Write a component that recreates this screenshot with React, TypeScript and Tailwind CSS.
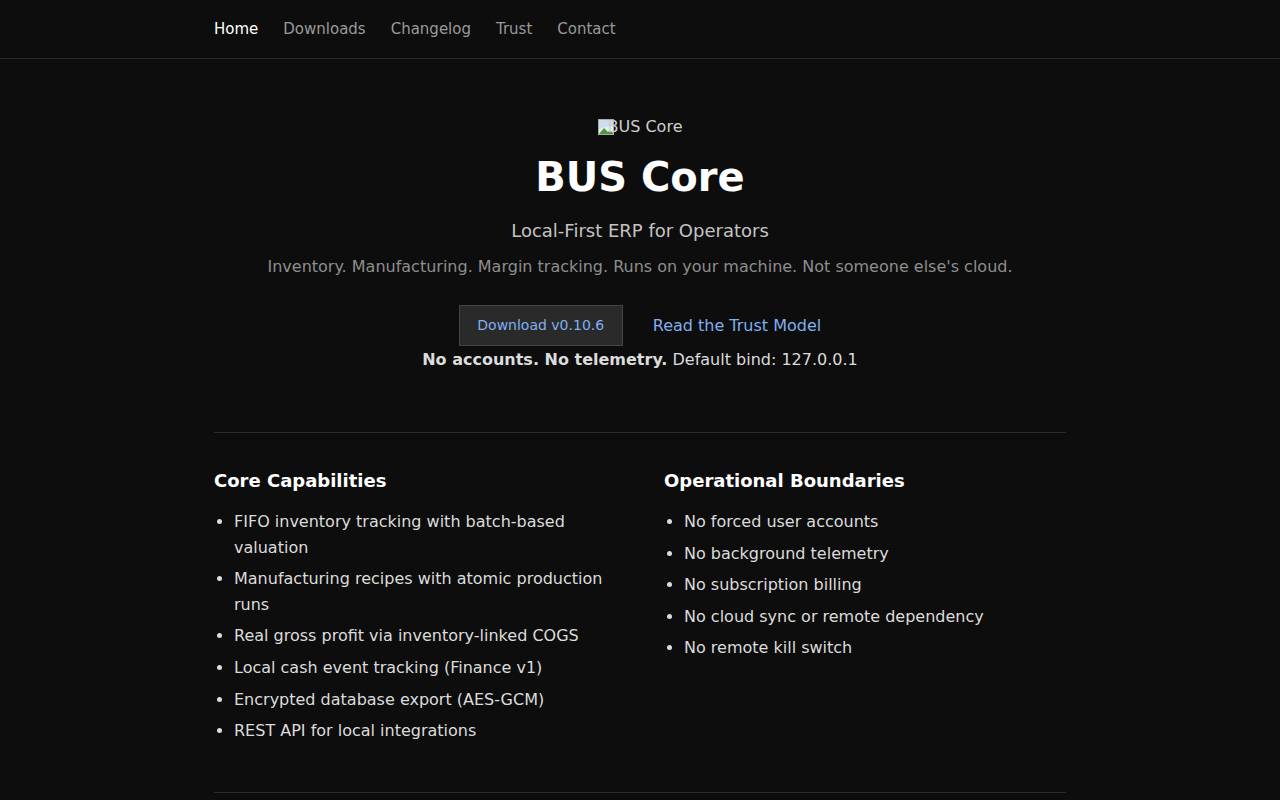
export default function App() {
  const caps = [
    'FIFO inventory tracking with batch-based valuation',
    'Manufacturing recipes with atomic production runs',
    'Real gross profit via inventory-linked COGS',
    'Local cash event tracking (Finance v1)',
    'Encrypted database export (AES-GCM)',
    'REST API for local integrations',
  ];
  const bounds = [
    'No forced user accounts',
    'No background telemetry',
    'No subscription billing',
    'No cloud sync or remote dependency',
    'No remote kill switch',
  ];
  return (
    <div className="min-h-screen bg-[#0d0d0d] text-[#dcdcdc]" style={{ fontFamily: '"DejaVu Sans", sans-serif' }}>
      <header className="border-b border-[#2a2a2a]">
        <nav className="mx-auto flex h-[58px] w-[852px] items-center gap-[25px] text-[15px] text-[#9a9a9a]">
          <span className="text-white">Home</span>
          <span>Downloads</span>
          <span>Changelog</span>
          <span>Trust</span>
          <span>Contact</span>
        </nav>
      </header>

      <main className="mx-auto w-[852px]">
        {/* Hero */}
        <section className="flex flex-col items-center pt-[56px] pb-[60px] text-center">
          <div className="flex items-center text-[16px] leading-[24px] text-[#cfcfcf]">
            <svg width="16" height="16" viewBox="0 0 16 16" className="mr-[-6px]">
              <rect x="0.5" y="0.5" width="15" height="15" fill="#eee" stroke="#aaa" />
              <path d="M1 15 L6 9 L10 13 L12 11 L15 14 V15 Z" fill="#4a9a3a" />
              <path d="M1 1 H15 V6 L1 10 Z" fill="#cde" />
            </svg>
            <span>BUS Core</span>
          </div>
          <h1 className="mt-[14px] text-[40px] font-bold leading-[48px] text-white">BUS Core</h1>
          <p className="mt-[16px] text-[18px] leading-[28px] text-[#c4c4c4]">Local-First ERP for Operators</p>
          <p className="mt-[10px] text-[16px] leading-[24px] text-[#8e8e8e]">
            Inventory. Manufacturing. Margin tracking. Runs on your machine. Not someone else's cloud.
          </p>
          <div className="mt-[26px] flex items-center gap-[30px]">
            <button className="h-[41px] w-[164px] border border-[#444] bg-[#2a2a2a] text-[14px] text-[#7fb0f0]">
              Download v0.10.6
            </button>
            <a className="text-[16px] text-[#7fb0f0]">Read the Trust Model</a>
          </div>
          <p className="mt-[2px] text-[16px] leading-[24px] text-[#dcdcdc]">
            <strong className="font-bold">No accounts. No telemetry.</strong> Default bind: 127.0.0.1
          </p>
        </section>

        <section className="grid grid-cols-2 gap-[48px] border-t border-[#2a2a2a] pt-[34px] pb-[48px]">
          <div>
            <h2 className="text-[18px] font-bold leading-[28px] text-white">Core Capabilities</h2>
            <ul className="mt-[14px] list-disc space-y-[6px] pl-[20px] text-[16px] leading-[25.6px]">
              {caps.map((c) => (
                <li key={c}>{c}</li>
              ))}
            </ul>
          </div>
          <div>
            <h2 className="text-[18px] font-bold leading-[28px] text-white">Operational Boundaries</h2>
            <ul className="mt-[14px] list-disc space-y-[6px] pl-[20px] text-[16px] leading-[25.6px]">
              {bounds.map((c) => (
                <li key={c}>{c}</li>
              ))}
            </ul>
          </div>
        </section>
        <div className="border-t border-[#2a2a2a] h-[40px]" />
      </main>
    </div>
  );
}
